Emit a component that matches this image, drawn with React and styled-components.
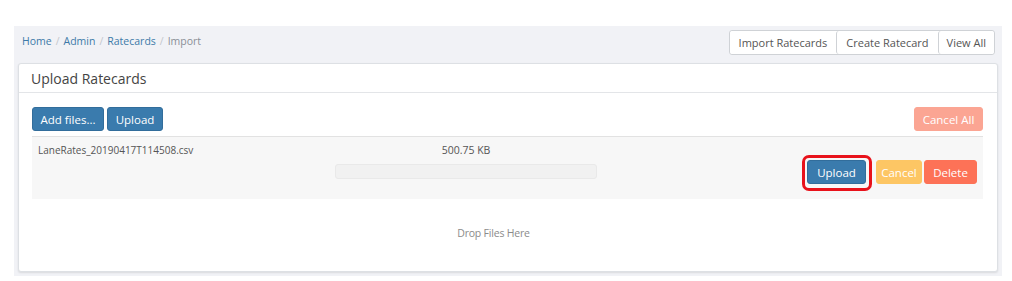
import React from "react";
import styled, { createGlobalStyle } from "styled-components";

const Global = createGlobalStyle`
  html, body { margin: 0; padding: 0; background: #fff; }
  body { font-family: "Open Sans", "Noto Sans", sans-serif; color: #555; }
  * { box-sizing: border-box; }
`;

const Page = styled.div`
  margin: 26px 10px 0 14px;
  height: 250px;
  background: #f1f2f6;
  padding: 4px 4px 0 4px;
`;

const TopBar = styled.div`
  display: flex;
  align-items: center;
  justify-content: space-between;
  height: 25px;
  margin-bottom: 8px;
  padding-right: 3px;
`;

const Crumbs = styled.nav`
  display: flex;
  gap: 4px;
  padding-left: 4px;
  font-size: 10.5px;
  margin-top: -4px;
`;

const Crumb = styled.span`
  color: ${(p) => (p.$active ? "#8a8f96" : "#3d7aa8")};
`;

const Sep = styled.span`
  color: #c4c7cc;
`;

const BtnGroup = styled.div`
  display: flex;
  border: 1px solid #cfd2d6;
  border-radius: 3px;
  background: #fff;
`;

const GroupBtn = styled.button`
  font-family: inherit;
  font-size: 11px;
  color: #555;
  background: #fff;
  border: none;
  border-left: ${(p) => (p.$first ? "none" : "1px solid #cfd2d6")};
  height: 23px;
  padding: 0 ${(p) => p.$px}px;
  border-radius: 3px;
`;

const Card = styled.section`
  background: #fff;
  border: 1px solid #dde0e4;
  border-radius: 3px;
  box-shadow: 0 1px 2px rgba(0, 0, 0, 0.1);
  height: 209px;
`;

const CardHeader = styled.div`
  height: 29px;
  border-bottom: 1px solid #e3e5e8;
  padding-left: 12px;
  display: flex;
  align-items: center;
  font-size: 14px;
  color: #444;
`;

const CardBody = styled.div`
  padding: 14px 14px 0 13px;
`;

const Toolbar = styled.div`
  display: flex;
  justify-content: space-between;
  margin-bottom: 5px;
`;

const Row = styled.div`
  display: flex;
  gap: ${(p) => p.$gap || 3}px;
  align-items: center;
`;

const Btn = styled.button`
  font-family: inherit;
  font-size: 11.5px;
  color: #fff;
  border-radius: 3px;
  height: 24px;
  width: ${(p) => p.$w}px;
  padding: 0;
  background: ${(p) => p.$bg};
  border: 1px solid ${(p) => p.$border || p.$bg};
`;

const FileRow = styled.div`
  display: grid;
  grid-template-columns: 297px 262px 1fr;
  background: #f7f7f7;
  border-top: 1px solid #e2e2e2;
  height: 63px;
  padding: 6px 6px 0 6px;
  font-size: 10.5px;
  color: #555;
`;

const FileName = styled.div`
  font-size: 10px;
`;

const SizeCol = styled.div`
  display: flex;
  flex-direction: column;
  align-items: center;
  gap: 7px;
`;

const Progress = styled.div`
  width: 100%;
  height: 15px;
  background: #f1f1f1;
  border: 1px solid #e9e9e9;
  border-radius: 3px;
`;

const Actions = styled.div`
  display: flex;
  justify-content: flex-end;
  align-items: flex-start;
  padding-top: 17px;
`;

const Highlight = styled.span`
  position: relative;
  display: inline-flex;
  margin-right: 10px;
  &::after {
    content: "";
    position: absolute;
    left: -5px;
    top: -5px;
    right: -6px;
    bottom: -7px;
    border: 3px solid #e8121b;
    border-radius: 7px;
  }
`;

const DropZone = styled.div`
  height: 68px;
  display: flex;
  align-items: center;
  justify-content: center;
  padding-right: 28px;
  font-size: 10.5px;
  letter-spacing: -0.2px;
  color: #8b8b8b;
`;

export default function App() {
  return (
    <>
      <Global />
      <Page>
        <TopBar>
          <Crumbs>
            <Crumb>Home</Crumb>
            <Sep>/</Sep>
            <Crumb>Admin</Crumb>
            <Sep>/</Sep>
            <Crumb>Ratecards</Crumb>
            <Sep>/</Sep>
            <Crumb $active>Import</Crumb>
          </Crumbs>
          <BtnGroup>
            <GroupBtn $first $px={9}>Import Ratecards</GroupBtn>
            <GroupBtn $px={9}>Create Ratecard</GroupBtn>
            <GroupBtn $px={8}>View All</GroupBtn>
          </BtnGroup>
        </TopBar>
        <Card>
          <CardHeader>Upload Ratecards</CardHeader>
          <CardBody>
            <Toolbar>
              <Row>
                <Btn $w={72} $bg="#3a7bad" $border="#326d9b">Add files...</Btn>
                <Btn $w={56} $bg="#3a7bad" $border="#326d9b">Upload</Btn>
              </Row>
              <Btn $w={69} $bg="#fba593">Cancel All</Btn>
            </Toolbar>
            <FileRow>
              <FileName>LaneRates_20190417T114508.csv</FileName>
              <SizeCol>
                <span>500.75 KB</span>
                <Progress />
              </SizeCol>
              <Actions>
                <Highlight>
                  <Btn $w={59} $bg="#3a7bad" $border="#326d9b">Upload</Btn>
                </Highlight>
                <Row $gap={2}>
                  <Btn $w={46} $bg="#fdc664">Cancel</Btn>
                  <Btn $w={53} $bg="#fd7257">Delete</Btn>
                </Row>
              </Actions>
            </FileRow>
            <DropZone>Drop Files Here</DropZone>
          </CardBody>
        </Card>
      </Page>
    </>
  );
}
